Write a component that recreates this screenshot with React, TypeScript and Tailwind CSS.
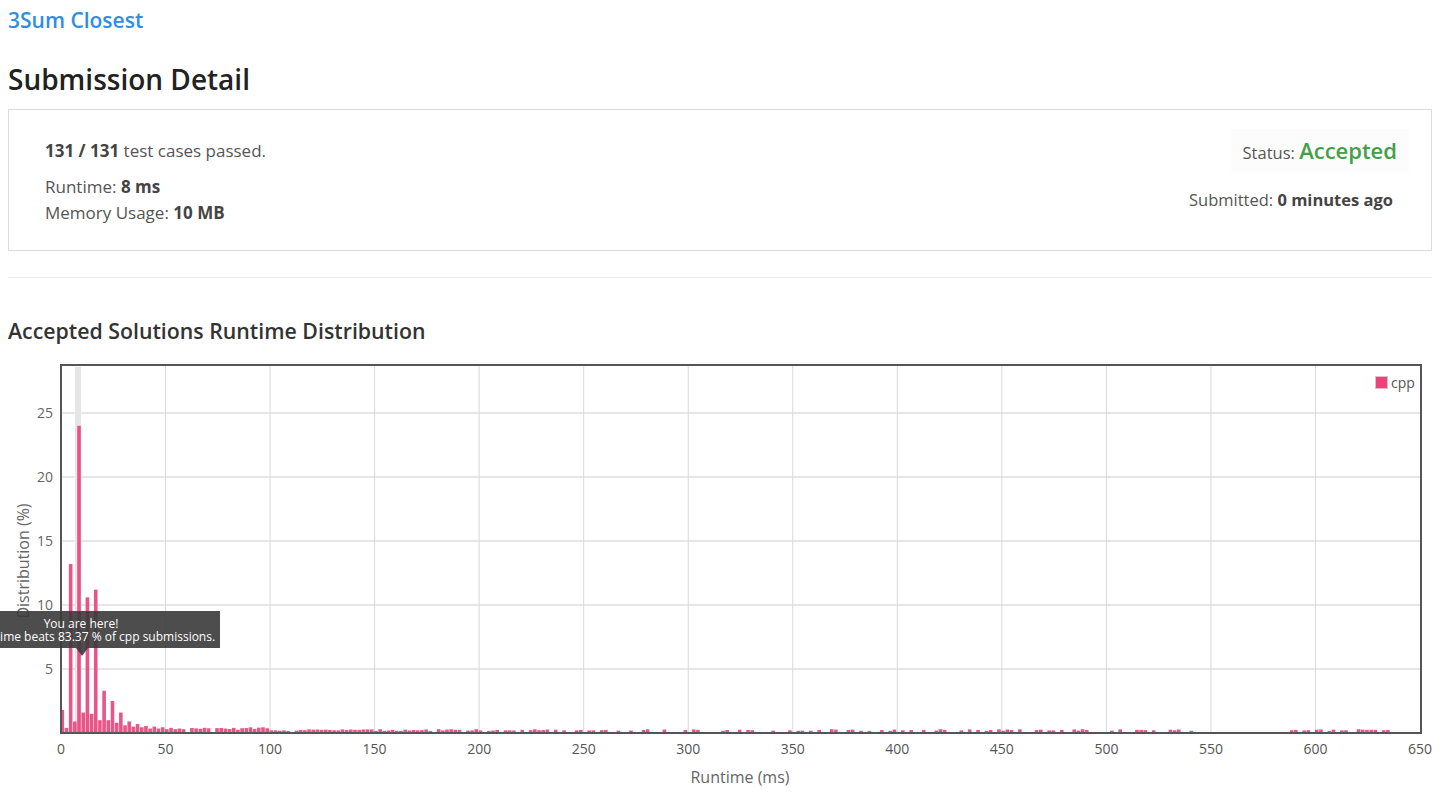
import React from 'react';

const X0 = 61;
const PX_PER_MS = 1359 / 650;
const Y0 = 732 - 355;
const PX_PER_PCT = 12.8;

const head = [
  1.8, 0.4, 13.2, 0.9, 24, 1.6, 10.6, 1.5, 11.2, 1.0, 3.3, 1.0, 2.5, 0.8, 1.6, 0.6, 0.9, 0.5, 0.7, 0.45,
  0.55, 0.35, 0.5, 0.35, 0.45, 0.3, 0.4, 0.3, 0.35, 0.3,
];

function rand(n: number) {
  const s = Math.sin(n * 12.9898) * 43758.5453;
  return s - Math.floor(s);
}

function buildBins() {
  const out: { ms: number; v: number }[] = [];
  head.forEach((v, i) => out.push({ ms: i * 2, v }));
  for (let i = head.length; i < 321; i++) {
    const ms = i * 2;
    let p = 0.5;
    if (ms < 110) p = 0.95;
    else if (ms < 220) p = 0.85;
    else if (ms > 540 && ms < 586) p = 0.08;
    else if (ms > 586) p = 0.7;
    if (rand(i) > p) continue;
    const r = rand(i * 7 + 3);
    const v = ms < 100 ? 0.25 + r * 0.22 : 0.16 + r * 0.14;
    out.push({ ms, v });
  }
  return out;
}

const bins = buildBins();
const xTicks = Array.from({ length: 14 }, (_, i) => i * 50);
const yTicks = [5, 10, 15, 20, 25];

function Chart() {
  return (
    <div className="relative -ml-2 mt-[10px] w-[1452px]">
      <svg width={1452} height={438} className="block" style={{ fontFamily: '"Open Sans", "Liberation Sans", sans-serif' }}>
        {/* highlight band for "you are here" */}
        <rect x={75} y={11} width={6} height={Y0 - 11} fill="#e6e6e6" />
        {yTicks.map((t) => {
          const y = Y0 - t * PX_PER_PCT;
          return (
            <g key={t}>
              <line x1={61} x2={1421} y1={y} y2={y} stroke="#e6e6e6" strokeWidth={2} />
              <text x={53} y={y + 5} textAnchor="end" fontSize={14} fill="#666">
                {t}
              </text>
            </g>
          );
        })}
        {xTicks.map((t) => {
          const x = X0 + t * PX_PER_MS;
          return (
            <g key={t}>
              {t > 0 && t < 650 && <line x1={x} x2={x} y1={9} y2={Y0} stroke="#d9d9d9" strokeWidth={1} />}
              <text x={x} y={398} textAnchor="middle" fontSize={14} fill="#555">
                {t}
              </text>
            </g>
          );
        })}
        {bins.map((b) => {
          const h = b.v * PX_PER_PCT;
          return (
            <rect
              key={b.ms}
              x={X0 + b.ms * PX_PER_MS - 0.5}
              y={Y0 - h}
              width={3.6}
              height={h}
              fill="#e9457d"
              fillOpacity={0.92}
            />
          );
        })}
        <rect x={61} y={9} width={1360} height={Y0 - 9} fill="none" stroke="#555" strokeWidth={2} />
        {/* legend */}
        <rect x={1375.5} y={20.5} width={12} height={12} fill="#e9457d" stroke="#f3b6cb" strokeWidth={1} />
        <text x={1391} y={32} fontSize={14} fill="#555">
          cpp
        </text>
        <text x={740} y={427} textAnchor="middle" fontSize={16} fill="#666">
          Runtime (ms)
        </text>
        <text
          x={0}
          y={0}
          transform={`translate(29 ${560 - 355}) rotate(-90)`}
          textAnchor="middle"
          fontSize={16}
          fill="#666"
        >
          Distribution (%)
        </text>
      </svg>
      <div className="absolute left-[-58px] top-[255px] w-[278px]">
        <div className="h-[37px] bg-[#3a3a3a]/90 flex flex-col items-center justify-center text-[12px] leading-[13px] text-white whitespace-nowrap">
          <span>You are here!</span>
          <span>Your runtime beats 83.37 % of cpp submissions.</span>
        </div>
        <div className="ml-[134px] w-0 h-0 border-l-[6px] border-r-[6px] border-t-[8px] border-l-transparent border-r-transparent border-t-[#3a3a3a]/90" />
      </div>
    </div>
  );
}

export default function App() {
  return (
    <div
      className="min-h-[793px] bg-white px-2 w-[1440px] overflow-hidden"
      style={{ fontFamily: '"Open Sans", "Liberation Sans", sans-serif' }}
    >
      <a className="block pt-[5px] text-[21px] leading-[30px] font-semibold text-[#2f8de4]">3Sum Closest</a>
      <h1 className="mt-[25px] text-[28px] leading-[38px] font-semibold text-[#222]">Submission Detail</h1>

      <div className="mt-[11px] h-[142px] border border-[#ddd] px-[36px] pt-[28px] flex justify-between text-[#555]">
        <div className="text-[17px]">
          <p className="leading-[26px]">
            <b className="font-bold text-[#444]">131 / 131</b> test cases passed.
          </p>
          <p className="mt-[10px] leading-[26px]">
            Runtime: <b className="font-bold text-[#444]">8 ms</b>
          </p>
          <p className="leading-[26px]">
            Memory Usage: <b className="font-bold text-[#444]">10 MB</b>
          </p>
        </div>
        <div className="flex flex-col items-end text-[16.5px]">
          <div className="-mt-[9px] bg-[#fcfcfc] px-[12px] py-[6px] -mr-[14px] flex items-baseline">
            <span>Status:&nbsp;</span>
            <span className="text-[22px] font-semibold text-[#43a047] leading-[30px]">Accepted</span>
          </div>
          <p className="mt-[15px] leading-[26px] mr-[2px]">
            Submitted: <b className="font-bold text-[#444]">0 minutes ago</b>
          </p>
        </div>
      </div>

      <hr className="mt-[26px] border-0 border-t border-[#eee]" />

      <h2 className="mt-[38px] text-[21.3px] leading-[30px] font-semibold text-[#333]">
        Accepted Solutions Runtime Distribution
      </h2>

      <Chart />
    </div>
  );
}
